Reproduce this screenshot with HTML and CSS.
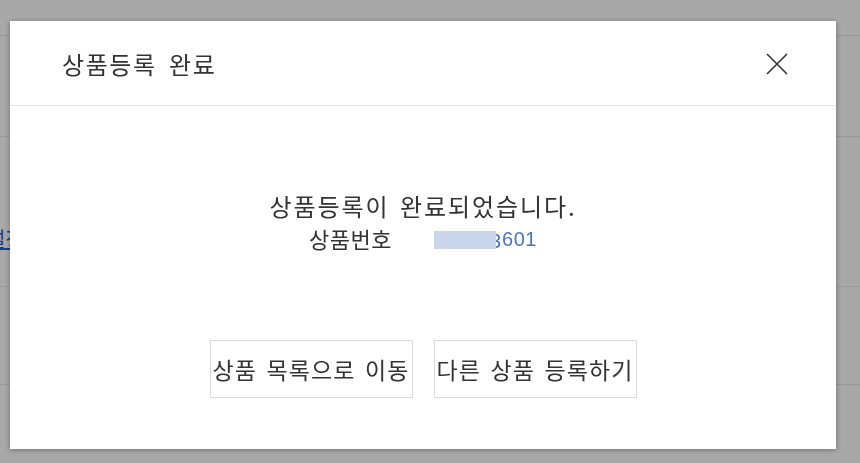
FILE: index.html
```html
<!DOCTYPE html>
<html lang="ko">
<head>
<meta charset="utf-8">
<title>상품등록 완료</title>
<link rel="stylesheet" href="styles.css">
</head>
<body>
<div class="page">
  <div class="row row-top"></div>
  <div class="row row-a"></div>
  <div class="row row-b"><a class="bg-link" href="#">설정</a></div>
  <div class="row row-c"></div>
  <div class="row row-d"></div>
</div>
<div class="dim"></div>
<div class="modal" role="dialog">
  <div class="modal-head">
    <h2 class="modal-title">상품등록 완료</h2>
    <button class="close" aria-label="닫기">
      <svg width="22" height="22" viewBox="0 0 22 22"><path d="M1 1 L21 21 M21 1 L1 21" stroke="#333" stroke-width="1.6" fill="none"/></svg>
    </button>
  </div>
  <div class="modal-body">
    <p class="msg">상품등록이 완료되었습니다.</p>
    <p class="msg num-line">상품번호<span class="num"><span class="mask"></span><span class="peek"><span class="peek-in">3</span></span><span class="num-text">601</span></span></p>
    <div class="actions">
      <button class="btn">상품 목록으로 이동</button>
      <button class="btn">다른 상품 등록하기</button>
    </div>
  </div>
</div>
</body>
</html>
```
FILE: styles.css
```css
* { box-sizing: border-box; }
html, body { margin: 0; padding: 0; }
body {
  width: 860px;
  height: 463px;
  overflow: hidden;
  background: #ffffff;
  font-family: "Noto Sans CJK KR", "Noto Sans", sans-serif;
  color: #333;
}
.page { display: flex; flex-direction: column; }
.row { border-bottom: 1px solid #e8e8e8; }
.row-top { height: 36px; }
.row-a { height: 101px; }
.row-b { height: 150px; display: flex; align-items: flex-start; padding-top: 90px; }
.row-c { height: 98px; }
.row-d { height: 80px; border-bottom: none; }
.bg-link {
  margin-left: -13px;
  color: #2a5bd7;
  font-size: 20px;
  line-height: 24px;
  text-decoration: underline;
}
.dim {
  position: fixed;
  inset: 0;
  background: rgba(0, 0, 0, 0.34);
}
.modal {
  position: fixed;
  left: 10px;
  top: 21px;
  width: 826px;
  height: 428px;
  background: #fff;
  box-shadow: 0 1px 6px rgba(0, 0, 0, 0.35);
  display: flex;
  flex-direction: column;
}
.modal-head {
  height: 85px;
  border-bottom: 1px solid #e4e4e4;
  display: flex;
  align-items: center;
  justify-content: space-between;
  padding: 0 48px 0 52px;
}
.modal-title {
  margin: 0;
  font-size: 24px;
  font-weight: 400;
  color: #333;
  letter-spacing: 1.6px;
  word-spacing: 4px;
}
.close {
  border: 0;
  background: none;
  padding: 0;
  width: 22px;
  height: 22px;
  display: flex;
  margin-top: 2px;
}
.modal-body {
  flex: 1;
  display: flex;
  flex-direction: column;
  align-items: center;
  padding-top: 83px;
}
.msg {
  margin: 0;
  font-size: 24px;
  line-height: 33px;
  color: #333;
  letter-spacing: 1.9px;
  word-spacing: 2px;
}
.num-line { font-size: 22px; letter-spacing: 0.5px; }
.num {
  display: inline-flex;
  align-items: center;
  margin-left: 42px;
  vertical-align: top;
  height: 33px;
  letter-spacing: 0;
}
.mask {
  display: inline-block;
  width: 62px;
  height: 18px;
  background: #cad6e8;
  margin-top: 2px;
}
.peek {
  display: inline-block;
  width: 5px;
  overflow: hidden;
  margin-top: 2px;
}
.peek-in {
  display: inline-block;
  margin-left: -6px;
  color: #4c72b8;
  font-size: 20px;
  font-family: "Liberation Sans", sans-serif;
}
.num-text {
  color: #4c72b8;
  font-size: 20px;
  font-family: "Liberation Sans", sans-serif;
  margin-top: 2px;
  margin-left: 1px;
  letter-spacing: 0.5px;
}
.actions {
  display: flex;
  gap: 21px;
  margin-top: 85px;
}
.btn {
  width: 203px;
  height: 58px;
  border: 1px solid #dadada;
  background: #fff;
  font-family: "Noto Sans CJK KR", "Noto Sans", sans-serif;
  font-size: 23px;
  color: #333;
  padding: 0;
  white-space: nowrap;
  word-spacing: 2px;
  letter-spacing: 1.1px;
}
```
